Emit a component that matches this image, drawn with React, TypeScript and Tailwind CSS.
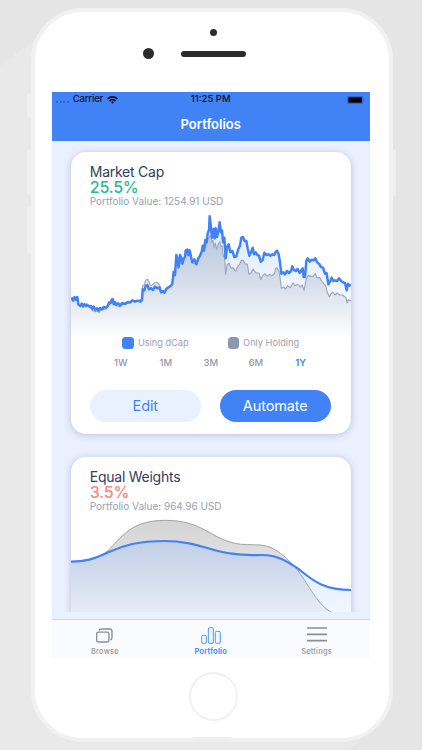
import React from 'react';

interface Series {
  line: string;
  color: string;
  width: number;
  fill: string;
}

interface PortfolioCardProps {
  name: string;
  change: string;
  positive: boolean;
  value: string;
  children: React.ReactNode;
}

const RANGES = ['1W', '1M', '3M', '6M', '1Y'];

// market cap series, "Using dCap"
const DCAP_LINE =
  '18,285 22,280 25,287 29,276 33,284 37,276 40,298 46,303 50,296 54,304 58,297 62,303 66,299 72,304 78,303 82,311 86,305 90,314 96,310 100,317 105,309 110,314 116,306 122,308 128,304 132,292 137,294 140,284 143,282 146,298 150,291 154,299 160,295 165,301 172,294 180,297 188,291 195,293 202,286 210,290 218,287 226,290 231,284 233,253 238,256 242,243 247,240 252,253 258,250 264,255 270,245 278,250 284,247 288,262 294,258 298,263 304,252 310,247 318,243 322,236 326,200 330,210 334,150 338,165 341,187 345,150 349,158 352,176 356,162 360,155 362,136 367,134 370,150 374,136 378,155 382,172 388,163 394,178 400,160 405,152 410,140 413,122 417,137 421,105 425,112 428,85 432,75 434,34 437,60 441,98 446,72 449,100 452,70 456,96 460,80 464,52 468,82 471,76 474,112 478,98 482,160 486,126 491,118 496,142 502,138 508,156 514,154 520,132 525,122 529,98 534,96 539,108 544,108 548,130 553,152 558,142 563,128 567,148 572,142 577,150 582,152 587,170 593,165 598,143 604,150 610,148 616,152 622,148 628,150 632,140 636,137 641,148 645,172 649,206 655,202 660,208 666,198 672,204 678,198 682,184 686,194 692,198 698,192 704,204 709,196 713,190 716,216 720,216 724,168 728,160 734,170 740,164 746,166 751,160 756,172 762,176 768,186 774,188 780,206 785,205 790,238 795,230 800,218 805,228 810,226 816,228 822,220 828,228 834,232 840,234 845,256 849,236 853,242 858,240';

// same range, plain holding
const HOLD_LINE =
  '18,285 22,280 29,278 37,278 40,299 50,298 62,304 72,304 82,316 90,320 98,317 102,323 108,312 116,314 124,312 130,302 140,288 146,298 154,302 165,306 174,298 188,295 202,287 218,287 231,284 233,242 238,240 242,226 248,223 252,230 256,242 262,240 268,234 276,232 284,240 288,262 298,264 310,247 322,236 326,208 330,212 334,160 341,187 348,162 352,176 360,156 367,142 374,150 382,174 394,178 405,154 413,130 417,138 423,118 428,104 433,96 437,92 441,112 444,106 447,128 451,114 455,134 460,116 464,110 468,126 471,122 475,156 478,150 482,208 486,180 492,174 498,190 504,188 512,199 518,184 524,178 529,166 534,166 540,176 547,178 552,208 558,204 564,192 570,200 576,204 582,204 587,224 593,212 599,206 606,214 613,208 620,212 628,206 632,190 636,188 642,200 646,224 649,250 656,246 662,252 668,242 676,248 684,234 690,242 698,238 706,246 712,240 717,256 720,242 724,220 730,212 738,214 744,214 751,206 756,218 764,218 770,228 776,236 782,242 787,262 793,276 798,266 804,262 810,270 816,264 824,270 832,270 838,274 843,278 846,294 850,284 858,288';

const EQUAL_LINE =
  'M18 335 C60 335 85 328 130 307 S220 273 300 273 C385 273 440 303 500 311 C540 317 560 315 590 315 C640 316 665 333 695 353 C735 382 765 420 858 420';
const EQUAL_HOLD_LINE =
  'M18 335 C60 335 85 330 120 309 C165 275 185 211 300 211 C410 211 430 260 505 279 C535 286 555 283 585 285 C630 287 660 322 684 344 C725 388 752 462 800 488';

function AreaChart({ viewBox, base, series, className }: { viewBox: string; base: number; series: Series[]; className: string }) {
  return (
    <svg viewBox={viewBox} preserveAspectRatio="none" className={className}>
      <defs>
        <linearGradient id="grayFill" x1="0" y1="0" x2="0" y2="1">
          <stop offset="0" stopColor="#858b98" stopOpacity="0.42" />
          <stop offset="1" stopColor="#858b98" stopOpacity="0" />
        </linearGradient>
        <linearGradient id="blueFill" x1="0" y1="0" x2="0" y2="1">
          <stop offset="0" stopColor="#8db9ff" stopOpacity="0.32" />
          <stop offset="1" stopColor="#8db9ff" stopOpacity="0" />
        </linearGradient>
        <linearGradient id="equalGrayFill" x1="0" y1="0" x2="0" y2="1">
          <stop offset="0" stopColor="#8d8d8d" stopOpacity="0.38" />
          <stop offset="1" stopColor="#8d8d9a" stopOpacity="0.1" />
        </linearGradient>
        <linearGradient id="equalBlueFill" x1="0" y1="0" x2="0" y2="1">
          <stop offset="0" stopColor="#8db9ff" stopOpacity="0.32" />
          <stop offset="1" stopColor="#8db9ff" stopOpacity="0.1" />
        </linearGradient>
      </defs>
      {series.map((s) => (
        <React.Fragment key={s.color}>
          <path d={`${s.line} L858 ${base} L18 ${base} Z`} fill={s.fill} />
          <path d={s.line} fill="none" stroke={s.color} strokeWidth={s.width} strokeLinejoin="round" />
        </React.Fragment>
      ))}
    </svg>
  );
}

function PortfolioCard({ name, change, positive, value, children }: PortfolioCardProps) {
  return (
    <div className="w-[280px] shrink-0 overflow-hidden rounded-[15px] bg-white shadow-[0_1px_7px_rgba(70,80,130,0.3)]">
      <div className="h-14 pt-[11px] pl-[19px]">
        <h2 className="text-[14px] leading-[17px] tracking-[-0.25px] text-[#333e5a]">{name}</h2>
        <p className={`text-base leading-[15px] font-medium tracking-[-0.2px] ${positive ? 'text-[#27b99a]' : 'text-[#f48684]'}`}>{change}</p>
        <p className="text-[10px] leading-[13px] text-[#979fb2]">Portfolio Value: {value} USD</p>
      </div>
      {children}
    </div>
  );
}

function Legend({ label, swatch }: { label: string; swatch: string }) {
  return (
    <div className="flex items-center gap-1">
      <span className={`size-[11.5px] rounded-[3.5px] ${swatch}`} />
      <span className="text-[9.2px] text-[#9aa1b2]">{label}</span>
    </div>
  );
}

function StatusBar() {
  return (
    <div className="grid h-4 grid-cols-3 items-center pr-1 pl-1 text-[9.5px] font-medium text-[#07142f]">
      <div className="flex items-center">
        <span className="mr-1 flex gap-[1.6px] pt-[5px]">
          {[0, 1, 2, 3].map((i) => (
            <span key={i} className="size-[2px] rounded-full bg-[#2961c2]" />
          ))}
        </span>
        <span className="tracking-[-0.2px]">Carrier</span>
        <svg viewBox="0 0 22 16" className="ml-1 h-2 w-[11px]" fill="none" stroke="#07142f" strokeWidth="3.6">
          <path d="M1 5.8 C7 0.5 15 0.5 21 5.8" />
          <path d="M5 10 C8.5 6.8 13.5 6.8 17 10" />
          <path d="M11 15.5 L7.7 12.2 C9.6 10.6 12.4 10.6 14.3 12.2 Z" fill="#07142f" stroke="none" />
        </svg>
      </div>
      <span className="text-center">11:25 PM</span>
      <svg viewBox="0 0 54 24" className="h-2 w-[18px] justify-self-end">
        <rect x="1" y="1" width="47" height="22" rx="6" fill="none" stroke="#285dbc" strokeWidth="2.5" />
        <rect x="4" y="4" width="41" height="16" rx="3" fill="#000" />
        <path d="M50 8 Q54 12 50 16 Z" fill="#285dbc" />
      </svg>
    </div>
  );
}

function TabBar() {
  return (
    <nav className="grid h-[38.5px] grid-cols-3 border-t border-[#cdd5e6] bg-[#fafbff] text-[7.5px] font-medium tracking-[0.2px] text-[#98999c]">
      <div className="flex flex-col items-center">
        <svg viewBox="0 0 50 44" className="mt-2 h-[15px] w-[17px]" fill="none" stroke="#8d8e91" strokeWidth="4">
          <rect x="2" y="12" width="36" height="29" rx="5" />
          <path d="M9 8 Q10 3 16 3 H40 Q47 3 47 10 V28 Q47 34 42 35" />
        </svg>
        <span className="mt-[3.5px] leading-[10px]">Browse</span>
      </div>
      <div className="flex flex-col items-center text-[#2e8cf7]">
        <svg viewBox="0 0 60 51" className="mt-[7px] h-[17px] w-5" fill="#f1f7ff" stroke="#3f95f5" strokeWidth="2.8">
          <rect x="2" y="25" width="14" height="24" rx="4" />
          <rect x="22" y="2" width="15" height="47" rx="4" />
          <rect x="43" y="13" width="15" height="36" rx="4" />
        </svg>
        <span className="mt-[2.5px] leading-[10px] font-semibold">Portfolio</span>
      </div>
      <div className="flex flex-col items-center">
        <svg viewBox="0 0 60 45" className="mt-[6.5px] h-[15px] w-5" stroke="#8d8e91" strokeWidth="5" strokeLinecap="round">
          <path d="M2 3 H58 M2 22 H58 M2 41 H58" />
        </svg>
        <span className="mt-[5px] leading-[10px]">Settings</span>
      </div>
    </nav>
  );
}

export default function App() {
  return (
    <div className="relative h-[750px] w-[422px] overflow-hidden bg-[#e9e9e9] pt-2 pl-[31px] font-['Inter','Liberation_Sans',sans-serif]">
      {/* long diagonal shadow behind the phone */}
      <div className="absolute inset-0 bg-[#e5e5e5] [clip-path:polygon(0_0,100%_0,100%_100%,350px_100%,377px_723px,200px_400px,34px_40px,0_66px)]" />

      {/* side buttons */}
      <div className="absolute top-[93px] left-[27px] h-[25px] w-2 rounded-l-sm bg-[#efefef]" />
      <div className="absolute top-[149px] left-[27px] h-[47px] w-2 rounded-l-sm bg-[#efefef]" />
      <div className="absolute top-[206px] left-[27px] h-[48px] w-2 rounded-l-sm bg-[#efefef]" />
      <div className="absolute top-[149px] left-[388px] h-[48px] w-2 rounded-r-sm bg-[#efefef]" />

      <div className="relative flex h-[734px] w-[361.5px] flex-col items-center rounded-[52px] border-4 border-[#f1f1f1] bg-white">
        {/* camera, sensor, speaker */}
        <div className="absolute top-[16.5px] left-[174.5px] size-[7.5px] rounded-full bg-[#2b2b2b]" />
        <div className="absolute top-[35.5px] left-[107.5px] size-[11.5px] rounded-full bg-[#2b2b2b]" />
        <div className="absolute top-[39px] left-[146px] h-[6px] w-[65px] rounded-full bg-[#2b2b2b]" />

        <div className="mt-[79.5px] mr-[2px] flex h-[566px] w-[317.5px] flex-col bg-[#eaf0fe]">
          <header className="h-[49.5px] shrink-0 bg-[#4282f7]">
            <StatusBar />
            <h1 className="pt-[6.5px] text-center text-[13px] leading-5 font-semibold text-white">Portfolios</h1>
          </header>

          <main className="flex h-[471px] shrink-0 flex-col items-center gap-[23px] overflow-hidden pt-[11px]">
            <PortfolioCard name="Market Cap" change="25.5%" positive value="1254.91">
              <AreaChart
                viewBox="18 9 840 390"
                base={399}
                className="block h-[130px] w-[280px]"
                series={[
                  { line: `M${HOLD_LINE}`, color: '#a3a5aa', width: 3.5, fill: 'url(#grayFill)' },
                  { line: `M${DCAP_LINE}`, color: '#4282f7', width: 7.5, fill: 'url(#blueFill)' },
                ]}
              />
              <div className="flex h-[10px] items-center justify-center gap-[39px]">
                <Legend label="Using dCap" swatch="bg-[#4282f7]" />
                <Legend label="Only Holding" swatch="bg-[#8d98b0]" />
              </div>
              <div className="mt-2 flex h-[14px] items-center justify-center text-[9.5px] font-medium text-[#8f97aa]">
                {RANGES.map((range) => (
                  <span key={range} className={`w-[45px] text-center ${range === '1Y' ? 'font-semibold text-[#4282f7]' : ''}`}>
                    {range}
                  </span>
                ))}
              </div>
              <div className="mt-5 flex h-[44px] justify-between pr-5 pl-[19px] text-[14.5px] tracking-[-0.1px]">
                <button className="h-[31.5px] w-[111px] rounded-full bg-[#eaf1fe] text-[#4282f7]">Edit</button>
                <button className="h-[31.5px] w-[111px] rounded-full bg-[#4282f7] text-white">Automate</button>
              </div>
            </PortfolioCard>

            <PortfolioCard name="Equal Weights" change="3.5%" positive={false} value="964.96">
              <AreaChart
                viewBox="18 195 840 300"
                base={500}
                className="mt-[2px] mb-6 block h-[100px] w-[280px]"
                series={[
                  { line: EQUAL_HOLD_LINE, color: '#a3a3a3', width: 3, fill: 'url(#equalGrayFill)' },
                  { line: EQUAL_LINE, color: '#4282f7', width: 6.5, fill: 'url(#equalBlueFill)' },
                ]}
              />
            </PortfolioCard>
          </main>

          <div className="mt-auto">
            <TabBar />
          </div>
        </div>

        <div className="mt-[14px] ml-[3px] size-[49px] rounded-full border-[2.5px] border-[#f1f1f1]" />
        <div className="absolute -bottom-1 left-[158px] h-[5px] w-[38px] bg-[#eeeeee]" />
      </div>
    </div>
  );
}
